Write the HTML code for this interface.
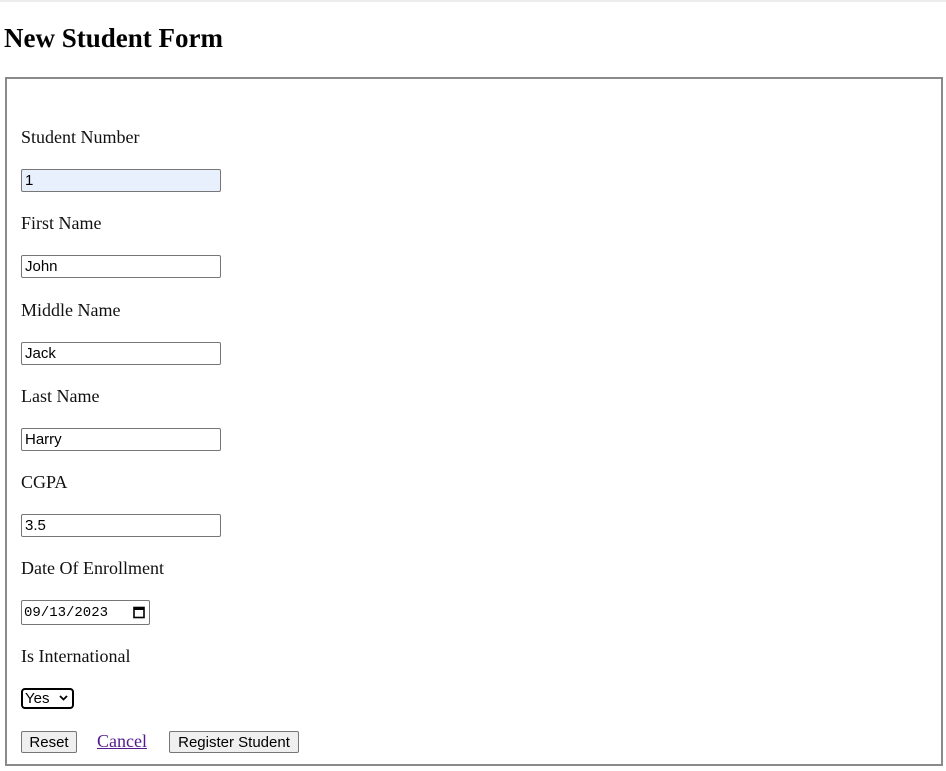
<!DOCTYPE html>
<html><head><style>
body{margin:0;width:946px;height:771px;background:#fff;position:relative;font-family:"Liberation Serif",serif;overflow:hidden}
.a{position:absolute}
.topline{left:0;top:0;width:946px;height:2px;background:#ececec}
h1{position:absolute;left:4px;top:22px;margin:0;font-size:27px;font-weight:bold;line-height:32px}
.fs{left:5px;top:77px;width:934px;height:685px;border:2px solid #8a8a8a}
.lbl{position:absolute;left:21px;font-size:18px;line-height:20px;color:#111}
.in{position:absolute;left:21px;border:1px solid #767676;border-radius:2px;font-family:"Liberation Sans",sans-serif;font-size:15px;line-height:22px;padding-left:3px;box-sizing:border-box;width:200px;height:23px}
.btn{position:absolute;top:731px;height:22px;border:1px solid #767676;border-radius:2px;background:#efefef;font-family:"Liberation Sans",sans-serif;font-size:15px;line-height:21px;box-sizing:border-box;text-align:center}
</style></head><body>
<div class="a topline"></div>
<h1>New Student Form</h1>
<div class="a fs"></div>
<div class="lbl" style="top:127px">Student Number</div>
<div class="in" style="top:169px;background:#e8f0fe">1</div>
<div class="lbl" style="top:213px">First Name</div>
<div class="in" style="top:255px">John</div>
<div class="lbl" style="top:300px">Middle Name</div>
<div class="in" style="top:342px">Jack</div>
<div class="lbl" style="top:386px">Last Name</div>
<div class="in" style="top:428px">Harry</div>
<div class="lbl" style="top:472px">CGPA</div>
<div class="in" style="top:514px">3.5</div>
<div class="lbl" style="top:558px">Date Of Enrollment</div>
<div class="in" style="top:600px;width:129px;height:25px;font-family:'Liberation Mono',monospace;font-size:14px;line-height:24px;padding-left:2px">09/13/2023
<svg style="position:absolute;right:4px;top:5px" width="12" height="13" viewBox="0 0 12 13"><rect x="1" y="1.5" width="10" height="10" fill="none" stroke="#000" stroke-width="1.6"/><rect x="1" y="1" width="10" height="3" fill="#000"/></svg></div>
<div class="lbl" style="top:646px">Is International</div>
<div class="a" style="left:21px;top:688px;width:53px;height:21px;border:2px solid #000;border-radius:4px;box-sizing:border-box;font-family:'Liberation Sans',sans-serif;font-size:15px;line-height:18px;padding-left:2px">Yes
<svg style="position:absolute;right:4px;top:5px" width="9" height="6" viewBox="0 0 9 6"><path d="M1 1l3.5 3.5L8 1" fill="none" stroke="#000" stroke-width="1.8"/></svg></div>
<div class="btn" style="left:21px;width:56px">Reset</div>
<div class="a" style="left:97px;top:731px;font-size:18px;line-height:20px;color:#551a8b;text-decoration:underline">Cancel</div>
<div class="btn" style="left:169px;width:130px">Register Student</div>
</body></html>
